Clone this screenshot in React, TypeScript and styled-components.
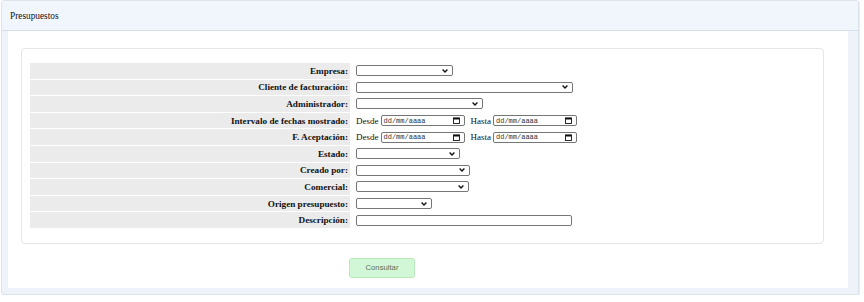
import React from "react";
import styled, { createGlobalStyle } from "styled-components";

const Global = createGlobalStyle`
  html, body { margin: 0; padding: 0; background: #ffffff; }
  body { font-family: "Liberation Serif", "Times New Roman", serif; }
`;

const Panel = styled.div`
  width: 858px;
  height: 295px;
  margin-left: 1px;
  border: 1px solid #dde3ec;
  border-radius: 3px;
  background: #eef2f9;
  display: flex;
  flex-direction: column;
  padding: 0 10px 6px 6px;
  box-sizing: border-box;
  box-shadow: 1px 1px 0 #e8ecf2;
`;

const Header = styled.div`
  height: 29px;
  flex: none;
  margin: 0 -10px 0 -6px;
  padding-left: 8px;
  display: flex;
  align-items: center;
  background: #f1f5fc;
  border-bottom: 1px solid #d6dee9;
  font-family: "Liberation Serif", serif;
  font-size: 9.3px;
  color: #111;
`;

const Body = styled.div`
  flex: 1;
  background: #ffffff;
  display: flex;
  flex-direction: column;
  padding: 17px 24px 0 13px;
`;

const Box = styled.div`
  border: 1px solid #e4e6ea;
  border-radius: 4px;
  padding: 14px 0 15px 8px;
`;

const Table = styled.table`
  border-collapse: separate;
  border-spacing: 0 1px;
  margin: -1px 0;
`;

const Label = styled.td`
  width: 318px;
  height: 15.6px;
  padding: 0 2px 0 0;
  background: #ebebeb;
  text-align: right;
  font-weight: bold;
  font-size: 9.2px;
  color: #111;
  white-space: nowrap;
`;

const Value = styled.td`
  padding: 0 0 0 6px;
  font-size: 9px;
  color: #111;
  white-space: nowrap;
`;

const Inline = styled.div`
  display: flex;
  align-items: center;
`;

const SelectWrap = styled.span<{ $w: number }>`
  position: relative;
  display: block;
  width: ${(p) => p.$w}px;
  height: 9px;
  border: 1px solid #767676;
  border-radius: 2px;
  background: #fff;
  box-sizing: content-box;
`;

const Select = styled.select`
  appearance: none;
  -webkit-appearance: none;
  border: none;
  outline: none;
  background: transparent;
  width: 100%;
  height: 100%;
  padding: 0;
  margin: 0;
  display: block;
  font-size: 7px;
`;

const Chevron = styled.svg`
  position: absolute;
  right: 4px;
  top: 2.5px;
  width: 6px;
  height: 4px;
  pointer-events: none;
`;

const TextInput = styled.input`
  display: block;
  width: 214px;
  height: 9px;
  padding: 0;
  margin: 0;
  border: 1px solid #767676;
  border-radius: 2px;
  box-sizing: content-box;
  font-size: 7px;
`;

const DateBox = styled.span`
  display: flex;
  align-items: center;
  justify-content: space-between;
  width: 76px;
  height: 9px;
  padding: 0 4px 0 2px;
  border: 1px solid #767676;
  border-radius: 2px;
  box-sizing: content-box;
  margin: 0 6px 0 2px;
  font-family: "Liberation Mono", "Courier New", monospace;
  font-size: 7px;
  color: #333;
`;

const DateLabel = styled.span`
  font-size: 9px;
  color: #111;
`;

const ButtonRow = styled.div`
  display: flex;
  padding: 14px 0 0 328px;
`;

const Button = styled.button`
  width: 66px;
  height: 20px;
  border: 1px solid #b8eabc;
  border-radius: 3px;
  background: #d2f7d6;
  color: #5e6f60;
  font-family: "Liberation Sans", Arial, sans-serif;
  font-size: 7.7px;
  padding: 0;
`;

const ChevronIcon = () => (
  <Chevron viewBox="0 0 6 4">
    <path d="M0.6 0.6 L3 3 L5.4 0.6" fill="none" stroke="#111" strokeWidth="1.4" />
  </Chevron>
);

const CalIcon = () => (
  <svg width="7" height="7" viewBox="0 0 7 7">
    <rect x="0.5" y="0.9" width="6" height="5.6" fill="none" stroke="#111" strokeWidth="0.9" />
    <rect x="0.5" y="0.9" width="6" height="1.6" fill="#111" />
  </svg>
);

const Sel = ({ w }: { w: number }) => (
  <SelectWrap $w={w}>
    <Select>
      <option></option>
    </Select>
    <ChevronIcon />
  </SelectWrap>
);

const DateField = () => (
  <DateBox>
    <span>dd/mm/aaaa</span>
    <CalIcon />
  </DateBox>
);

const DateRange = () => (
  <Inline>
    <DateLabel>Desde</DateLabel>
    <DateField />
    <DateLabel>Hasta</DateLabel>
    <DateField />
  </Inline>
);

const rows: { label: string; el: React.ReactNode }[] = [
  { label: "Empresa:", el: <Sel w={95} /> },
  { label: "Cliente de facturación:", el: <Sel w={215} /> },
  { label: "Administrador:", el: <Sel w={125} /> },
  { label: "Intervalo de fechas mostrado:", el: <DateRange /> },
  { label: "F. Aceptación:", el: <DateRange /> },
  { label: "Estado:", el: <Sel w={102} /> },
  { label: "Creado por:", el: <Sel w={112} /> },
  { label: "Comercial:", el: <Sel w={111} /> },
  { label: "Origen presupuesto:", el: <Sel w={74} /> },
  { label: "Descripción:", el: <TextInput type="text" /> },
];

export default function App() {
  return (
    <>
      <Global />
      <Panel>
        <Header>Presupuestos</Header>
        <Body>
          <Box>
            <Table>
              <tbody>
                {rows.map((r) => (
                  <tr key={r.label}>
                    <Label>{r.label}</Label>
                    <Value>{r.el}</Value>
                  </tr>
                ))}
              </tbody>
            </Table>
          </Box>
          <ButtonRow>
            <Button>Consultar</Button>
          </ButtonRow>
        </Body>
      </Panel>
    </>
  );
}
